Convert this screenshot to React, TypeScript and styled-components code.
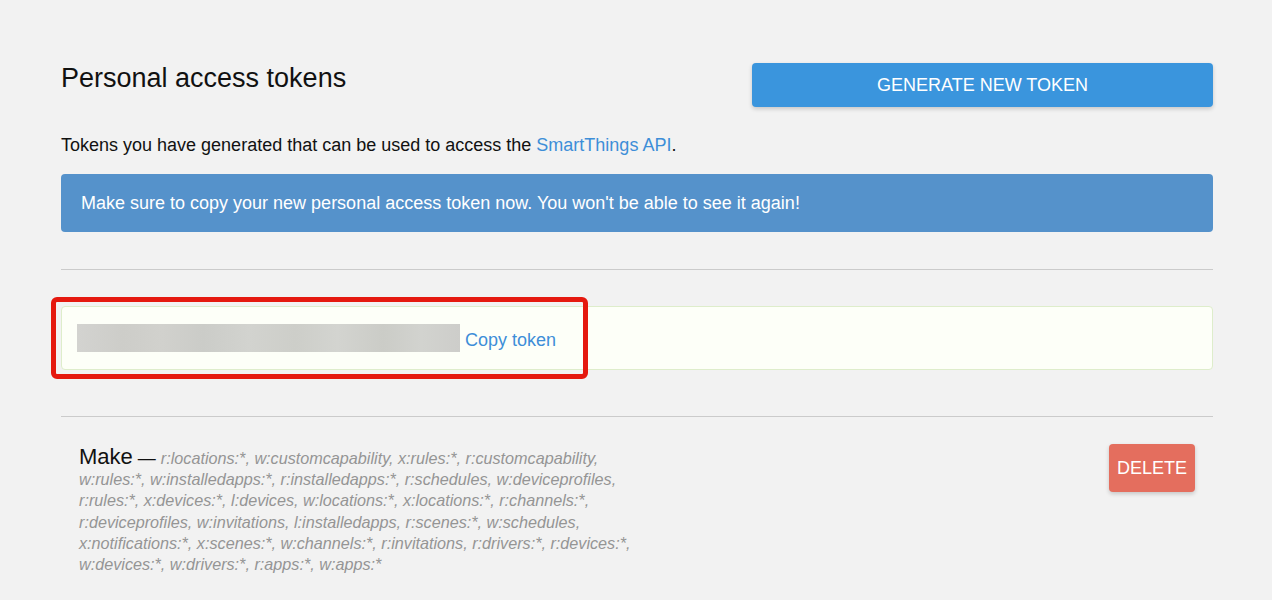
import React from "react";
import styled, { createGlobalStyle } from "styled-components";

const Global = createGlobalStyle`
  html, body { margin: 0; padding: 0; background: #f2f2f2; }
  body { font-family: "Liberation Sans", Arial, sans-serif; color: #111; }
`;

const Page = styled.div`
  box-sizing: border-box;
  width: 1272px;
  padding: 63px 59px 0 61px;
`;

const Header = styled.div`
  display: flex;
  justify-content: space-between;
  align-items: flex-start;
`;

const Title = styled.h1`
  margin: 0;
  font-size: 27px;
  line-height: 30px;
  font-weight: 400;
  color: #111;
`;

const Button = styled.button<{ $variant?: "primary" | "danger" }>`
  border: none;
  border-radius: 4px;
  color: #fff;
  font-family: "Liberation Sans", Arial, sans-serif;
  font-size: 18px;
  text-transform: uppercase;
  cursor: pointer;
  box-shadow: 0 2px 4px rgba(0, 0, 0, 0.18);
  background: ${(p) => (p.$variant === "danger" ? "#e46e5e" : "#3a95dd")};
  width: ${(p) => (p.$variant === "danger" ? "86px" : "461px")};
  height: ${(p) => (p.$variant === "danger" ? "48px" : "44px")};
  padding: 0;
  flex-shrink: 0;
`;

const Intro = styled.p`
  margin: 26px 0 0;
  font-size: 18px;
  line-height: 24px;
`;

const Link = styled.a`
  color: #3d8ed8;
  text-decoration: none;
`;

const Alert = styled.div`
  margin-top: 17px;
  background: #5592cb;
  border-radius: 4px;
  color: #fff;
  font-size: 18px;
  line-height: 22px;
  padding: 18px 20px;
`;

const Rule = styled.hr<{ $top: number }>`
  margin: ${(p) => p.$top}px 0 0;
  border: none;
  border-top: 1px solid #cbcbcb;
  height: 0;
`;

const TokenCard = styled.div`
  position: relative;
  margin-top: 36px;
  background: #fdfff8;
  border: 1px solid #deedcb;
  border-radius: 4px;
  padding: 17px 15px;
  display: flex;
  align-items: center;
  gap: 5px;
`;

const Blurred = styled.div`
  width: 383px;
  height: 28px;
  background: linear-gradient(
    90deg,
    #d3d3d0 0%,
    #cdcdc9 12%,
    #d1d1cd 22%,
    #cbccc8 33%,
    #d2d3cf 45%,
    #cdcec9 57%,
    #d3d4d0 68%,
    #cbccc7 80%,
    #d2d3cf 90%,
    #cdcdca 100%
  );
  filter: blur(0.6px);
`;

const CopyLink = styled.a`
  color: #3d8ed8;
  font-size: 18px;
  line-height: 24px;
  margin-top: 4px;
  text-decoration: none;
`;

const Highlight = styled.div`
  position: absolute;
  left: -11px;
  top: -10px;
  width: 537px;
  height: 82px;
  box-sizing: border-box;
  border: 5px solid #e5190f;
  border-radius: 6px;
  pointer-events: none;
`;

const TokenRow = styled.div`
  margin-top: 27px;
  padding: 0 18px;
  display: flex;
  justify-content: space-between;
  align-items: flex-start;
`;

const TokenInfo = styled.div`
  width: 560px;
  padding-top: 2px;
  font-size: 18px;
  line-height: 21.2px;
  color: #111;
`;

const TokenName = styled.span`
  font-size: 22px;
`;

const Scopes = styled.span`
  font-style: italic;
  font-size: 16.2px;
  color: #959595;
`;

const scopes =
  "r:locations:*, w:customcapability, x:rules:*, r:customcapability, w:rules:*, w:installedapps:*, r:installedapps:*, r:schedules, w:deviceprofiles, r:rules:*, x:devices:*, l:devices, w:locations:*, x:locations:*, r:channels:*, r:deviceprofiles, w:invitations, l:installedapps, r:scenes:*, w:schedules, x:notifications:*, x:scenes:*, w:channels:*, r:invitations, r:drivers:*, r:devices:*, w:devices:*, w:drivers:*, r:apps:*, w:apps:*";

export default function App() {
  return (
    <>
      <Global />
      <Page>
        <Header>
          <Title>Personal access tokens</Title>
          <Button>Generate new token</Button>
        </Header>
        <Intro>
          Tokens you have generated that can be used to access the{" "}
          <Link href="#">SmartThings API</Link>.
        </Intro>
        <Alert>
          Make sure to copy your new personal access token now. You won't be able to see it again!
        </Alert>
        <Rule $top={37} />
        <TokenCard>
          <Blurred />
          <CopyLink href="#">Copy token</CopyLink>
          <Highlight />
        </TokenCard>
        <Rule $top={46} />
        <TokenRow>
          <TokenInfo>
            <TokenName>Make</TokenName> — <Scopes>{scopes}</Scopes>
          </TokenInfo>
          <Button $variant="danger">Delete</Button>
        </TokenRow>
      </Page>
    </>
  );
}
